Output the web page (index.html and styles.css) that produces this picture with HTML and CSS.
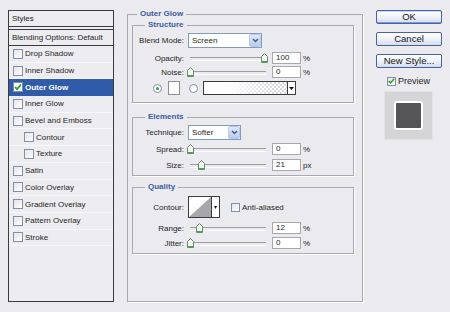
FILE: index.html
```html
<!DOCTYPE html>
<html lang="en">
<head>
    <meta charset="UTF-8">
    <title>Layer Style - Outer Glow</title>
    <link rel="stylesheet" href="styles.css">
</head>
<body>
    <!-- Styles list -->
    <div class="styles-list">
        <div class="list-head">Styles</div>
        <div class="list-blend">Blending Options: Default</div>
        <ul class="effects">
            <li class="effect"><span class="check"></span>Drop Shadow</li>
            <li class="effect"><span class="check"></span>Inner Shadow</li>
            <li class="effect selected"><span class="check"><svg width="8" height="8" viewBox="0 0 8 8"><path d="M1 4 L3 6.2 L7 1.5" fill="none" stroke="#27a127" stroke-width="1.8"/></svg></span>Outer Glow</li>
            <li class="effect"><span class="check"></span>Inner Glow</li>
            <li class="effect"><span class="check"></span>Bevel and Emboss</li>
            <li class="effect sub"><span class="check"></span>Contour</li>
            <li class="effect sub"><span class="check"></span>Texture</li>
            <li class="effect"><span class="check"></span>Satin</li>
            <li class="effect"><span class="check"></span>Color Overlay</li>
            <li class="effect"><span class="check"></span>Gradient Overlay</li>
            <li class="effect"><span class="check"></span>Pattern Overlay</li>
            <li class="effect"><span class="check"></span>Stroke</li>
        </ul>
    </div>

    <!-- Outer Glow settings -->
    <fieldset class="panel">
        <legend>Outer Glow</legend>
        <div class="panel-body">
            <fieldset class="group structure">
                <legend>Structure</legend>
                <div class="group-body">
                    <div class="row select-row">
                        <span class="lbl">Blend Mode:</span>
                        <div class="dropdown blend"><span class="val">Screen</span><span class="drop-btn"><svg width="7" height="5" viewBox="0 0 7 5"><path d="M1 1 L3.5 3.5 L6 1" fill="none" stroke="#4a5e84" stroke-width="1.5"/></svg></span></div>
                    </div>
                    <div class="row slider-row first">
                        <span class="lbl">Opacity:</span>
                        <div class="slider"><span class="thumb" style="left: 75px"><svg width="7" height="10" viewBox="0 0 7 10"><path d="M3.5 0.5 L6.5 3.5 V9.5 H0.5 V3.5 Z" fill="#f3f5f1" stroke="#6b8a6b"/><path d="M1 8.5 H6" stroke="#38b040"/></svg></span></div>
                        <div class="field">100</div><span class="unit">%</span>
                    </div>
                    <div class="row slider-row">
                        <span class="lbl">Noise:</span>
                        <div class="slider"><span class="thumb" style="left: 1px"><svg width="7" height="10" viewBox="0 0 7 10"><path d="M3.5 0.5 L6.5 3.5 V9.5 H0.5 V3.5 Z" fill="#f3f5f1" stroke="#6b8a6b"/><path d="M1 8.5 H6" stroke="#38b040"/></svg></span></div>
                        <div class="field">0</div><span class="unit">%</span>
                    </div>
                    <div class="row color-row">
                        <span class="radio on"></span>
                        <span class="swatch"></span>
                        <span class="radio second"></span>
                        <div class="gradient"><span class="grad-fill"></span><span class="grad-btn"><svg width="5" height="3" viewBox="0 0 5 3"><path d="M0 0 H5 L2.5 3 Z" fill="#111"/></svg></span></div>
                    </div>
                </div>
            </fieldset>

            <fieldset class="group elements">
                <legend>Elements</legend>
                <div class="group-body">
                    <div class="row select-row">
                        <span class="lbl">Technique:</span>
                        <div class="dropdown technique"><span class="val">Softer</span><span class="drop-btn"><svg width="7" height="5" viewBox="0 0 7 5"><path d="M1 1 L3.5 3.5 L6 1" fill="none" stroke="#4a5e84" stroke-width="1.5"/></svg></span></div>
                    </div>
                    <div class="row slider-row first">
                        <span class="lbl">Spread:</span>
                        <div class="slider"><span class="thumb" style="left: 1px"><svg width="7" height="10" viewBox="0 0 7 10"><path d="M3.5 0.5 L6.5 3.5 V9.5 H0.5 V3.5 Z" fill="#f3f5f1" stroke="#6b8a6b"/><path d="M1 8.5 H6" stroke="#38b040"/></svg></span></div>
                        <div class="field">0</div><span class="unit">%</span>
                    </div>
                    <div class="row slider-row wide">
                        <span class="lbl">Size:</span>
                        <div class="slider"><span class="thumb" style="left: 12px"><svg width="7" height="10" viewBox="0 0 7 10"><path d="M3.5 0.5 L6.5 3.5 V9.5 H0.5 V3.5 Z" fill="#f3f5f1" stroke="#6b8a6b"/><path d="M1 8.5 H6" stroke="#38b040"/></svg></span></div>
                        <div class="field">21</div><span class="unit">px</span>
                    </div>
                </div>
            </fieldset>

            <fieldset class="group quality">
                <legend>Quality</legend>
                <div class="group-body">
                    <div class="row contour-row">
                        <span class="lbl">Contour:</span>
                        <div class="contour">
                            <svg width="22" height="20" viewBox="0 0 22 20"><path d="M0 20 L22 0 V20 Z" fill="#a7a7ab"/></svg>
                            <span class="contour-btn"><svg width="3" height="5" viewBox="0 0 3 5"><path d="M0 1 H3 L1.5 4 Z" fill="#111"/></svg></span>
                        </div>
                        <span class="check small"></span>
                        <span class="aa-label">Anti-aliased</span>
                    </div>
                    <div class="row slider-row first">
                        <span class="lbl">Range:</span>
                        <div class="slider"><span class="thumb" style="left: 10px"><svg width="7" height="10" viewBox="0 0 7 10"><path d="M3.5 0.5 L6.5 3.5 V9.5 H0.5 V3.5 Z" fill="#f3f5f1" stroke="#6b8a6b"/><path d="M1 8.5 H6" stroke="#38b040"/></svg></span></div>
                        <div class="field">12</div><span class="unit">%</span>
                    </div>
                    <div class="row slider-row">
                        <span class="lbl">Jitter:</span>
                        <div class="slider"><span class="thumb" style="left: 1px"><svg width="7" height="10" viewBox="0 0 7 10"><path d="M3.5 0.5 L6.5 3.5 V9.5 H0.5 V3.5 Z" fill="#f3f5f1" stroke="#6b8a6b"/><path d="M1 8.5 H6" stroke="#38b040"/></svg></span></div>
                        <div class="field">0</div><span class="unit">%</span>
                    </div>
                </div>
            </fieldset>
        </div>
    </fieldset>

    <!-- Buttons and preview -->
    <div class="actions">
        <button class="btn default">OK</button>
        <button class="btn">Cancel</button>
        <button class="btn">New Style...</button>
        <div class="preview-toggle">
            <span class="check small"><svg width="8" height="8" viewBox="0 0 8 8"><path d="M1 4 L3 6.2 L7 1.5" fill="none" stroke="#27a127" stroke-width="1.8"/></svg></span>
            <span>Preview</span>
        </div>
        <div class="preview-box"><div class="preview-swatch"></div></div>
    </div>
</body>
</html>
```

FILE: styles.css
```css
* {
    box-sizing: border-box;
}

body {
    margin: 0;
    height: 312px;
    padding: 9px 8px 10px;
    display: flex;
    background: #ebeaef;
    font-family: "Liberation Sans", Arial, sans-serif;
    font-size: 8px;
    color: #1f1f22;
}

/* ---- styles list ---- */
.styles-list {
    width: 106px;
    margin-top: 1px;
    border: 1px solid #3b3b3e;
    background: #edecf1;
}

.list-head,
.list-blend {
    line-height: 15px;
    padding-left: 3px;
    white-space: nowrap;
}

.list-head {
    height: 16px;
    border-bottom: 1px solid #3b3b3e;
}

.list-blend {
    height: 17px;
    margin-top: 2px;
    border-top: 1px solid #3b3b3e;
    border-bottom: 1px solid #3b3b3e;
}

.effects {
    list-style: none;
    margin: 0;
    padding: 0;
}

.effect {
    height: 16.7px;
    display: flex;
    align-items: center;
    padding-left: 4px;
    border-bottom: 1px solid #f7f7fa;
    white-space: nowrap;
}

.effect.sub {
    padding-left: 15px;
}

.effect.selected {
    background: #2f5ba8;
    color: #ffffff;
    font-weight: bold;
    border-bottom-color: #2f5ba8;
}

.check {
    width: 10px;
    height: 10px;
    margin-right: 2px;
    border: 1px solid #8190a8;
    background: linear-gradient(135deg, #e4e4ea, #ffffff);
    display: flex;
    align-items: center;
    justify-content: center;
    flex-shrink: 0;
}

.check.small {
    width: 9px;
    height: 9px;
}

.selected .check {
    background: #ffffff;
}

/* ---- main panel ---- */
fieldset {
    margin: 0;
    padding: 0;
    min-width: 0;
    border: 1px solid #aaa9b2;
    box-shadow: 1px 1px 0 #ffffff;
}

legend {
    padding: 0 3px;
    line-height: 10px;
    font-weight: bold;
    color: #3a5ca0;
}

.panel {
    width: 236px;
    margin-left: 13px;
}

.panel > legend {
    margin-left: 9px;
}

.panel-body {
    padding: 1px 8px 0 4px;
}

.group > legend {
    margin-left: 12px;
}

.structure {
    margin-bottom: 9px;
}

.structure .group-body {
    padding: 3px 0 7px;
}

.elements {
    margin-bottom: 6px;
}

.elements .group-body {
    padding: 3px 0 4px;
}

.quality .group-body {
    padding: 4px 0 4px;
}

.row {
    display: flex;
    align-items: center;
}

.lbl {
    width: 51px;
    text-align: right;
    white-space: nowrap;
    flex-shrink: 0;
}

.select-row {
    height: 15px;
}

.select-row .lbl {
    margin-right: 4px;
}

.slider-row {
    height: 12px;
    margin-top: 2px;
}

.slider-row.first,
.slider-row.wide {
    margin-top: 4px;
}

.elements .slider-row.first {
    margin-top: 3px;
}

.quality .slider-row {
    margin-top: 3px;
}

.quality .slider-row.first {
    margin-top: 4px;
}

/* dropdowns */
.dropdown {
    height: 15px;
    display: flex;
    border: 1px solid #7f9db9;
    background: #ffffff;
}

.dropdown.blend {
    width: 74px;
}

.dropdown.technique {
    width: 53px;
}

.dropdown .val {
    flex: 1;
    padding-left: 3px;
    line-height: 13px;
}

.drop-btn {
    width: 12px;
    border: 1px solid #b8c8ea;
    border-radius: 2px;
    background: linear-gradient(#e0e9fb, #b9cbf1);
    display: flex;
    align-items: center;
    justify-content: center;
}

/* sliders */
.slider {
    position: relative;
    width: 82px;
    height: 12px;
    margin-left: 2px;
}

.slider::before {
    content: "";
    position: absolute;
    left: 4px;
    right: 2px;
    top: 5px;
    height: 2px;
    border-top: 1px solid #9d9ca6;
    border-bottom: 1px solid #ffffff;
}

.thumb {
    position: absolute;
    top: 1px;
    width: 7px;
    height: 10px;
    display: block;
}

.thumb svg {
    display: block;
}

.field {
    width: 29px;
    height: 12px;
    margin-left: 4px;
    padding-left: 3px;
    border: 1px solid #a9a8b0;
    background: #ffffff;
    line-height: 10px;
}

.unit {
    margin-left: 2px;
}

/* color row */
.color-row {
    height: 14px;
    margin-top: 3px;
    padding-left: 20px;
}

.radio {
    width: 9px;
    height: 9px;
    border: 1px solid #7d8da6;
    border-radius: 50%;
    background: #ffffff;
    display: flex;
    align-items: center;
    justify-content: center;
}

.radio.on::after {
    content: "";
    width: 3px;
    height: 3px;
    border-radius: 50%;
    background: #2ea32e;
}

.radio.second {
    margin-left: 9px;
}

.swatch {
    width: 12px;
    height: 14px;
    margin-left: 6px;
    border: 1px solid #8e8e94;
    background: #ffffff;
}

.gradient {
    width: 93px;
    height: 14px;
    margin-left: 5px;
    display: flex;
    border: 1px solid #3c3c3f;
}

.grad-fill {
    flex: 1;
    background:
        linear-gradient(to right, #ffffff 30%, rgba(255, 255, 255, 0) 85%),
        repeating-conic-gradient(#d9d9dc 0 25%, #ffffff 0 50%) 0 0 / 4px 4px;
}

.grad-btn {
    width: 8px;
    border-left: 1px solid #3c3c3f;
    background: #ffffff;
    display: flex;
    align-items: center;
    justify-content: center;
}

/* contour row */
.contour-row {
    height: 22px;
}

.contour-row .lbl {
    margin-right: 4px;
}

.contour {
    width: 32px;
    height: 22px;
    display: flex;
    border: 1px solid #3c3c3f;
    background: #ffffff;
}

.contour svg {
    display: block;
}

.contour-btn {
    width: 8px;
    border-left: 1px solid #3c3c3f;
    display: flex;
    align-items: center;
    justify-content: center;
}

.contour-row .check {
    margin-left: 11px;
}

/* ---- actions ---- */
.actions {
    margin-left: 13px;
    padding-top: 1px;
    display: flex;
    flex-direction: column;
}

.btn {
    width: 66px;
    height: 14px;
    padding: 0;
    margin-bottom: 8px;
    border: 1px solid #45639e;
    border-radius: 2px;
    background: linear-gradient(#ffffff, #eef0f7 55%, #d3dbee);
    font-family: "Liberation Sans", Arial, sans-serif;
    font-size: 9.5px;
    line-height: 12px;
    color: #141414;
}

.btn.default {
    box-shadow: inset 0 -1px 0 #7d9bd6, inset 0 1px 0 #c7d6f4;
}

.preview-toggle {
    display: flex;
    align-items: center;
    margin-left: 11px;
    margin-top: -1px;
    font-size: 9px;
    height: 12px;
}

.preview-box {
    width: 49px;
    height: 49px;
    margin-left: 8px;
    margin-top: 4px;
    border: 1px solid #e4e4e8;
    background: #d5d5d8;
    display: flex;
    align-items: center;
    justify-content: center;
}

.preview-swatch {
    width: 29px;
    height: 29px;
    border: 2px solid #ffffff;
    border-radius: 3px;
    background: #555557;
}
```
